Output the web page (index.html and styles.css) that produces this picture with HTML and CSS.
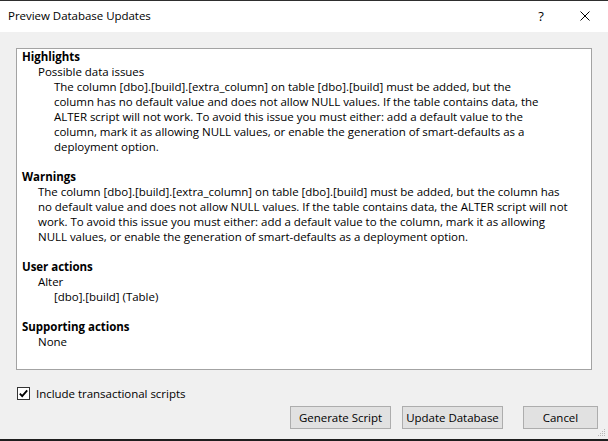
FILE: index.html
```html
<!DOCTYPE html>
<html>
<head>
<meta charset="utf-8">
<link rel="stylesheet" href="styles.css">
</head>
<body>
<div class="window">
  <div class="titlebar">
    <div class="title">Preview Database Updates</div>
    <div class="tb-btn help">?</div>
    <div class="tb-btn close">
      <svg width="10" height="10" viewBox="0 0 10 10"><path d="M0.5 0.5 L9.5 9.5 M9.5 0.5 L0.5 9.5" stroke="#000" stroke-width="1" fill="none"/></svg>
    </div>
  </div>
  <div class="body">
    <div class="panel">
      <div class="section">
        <div class="head">Highlights</div>
        <div class="l1">Possible data issues</div>
        <div class="l2">The column [dbo].[build].[extra_column] on table [dbo].[build] must be added, but the<br>column has no default value and does not allow NULL values. If the table contains data, the<br>ALTER script will not work. To avoid this issue you must either: add a default value to the<br>column, mark it as allowing NULL values, or enable the generation of smart-defaults as a<br>deployment option.</div>
      </div>
      <div class="section">
        <div class="head">Warnings</div>
        <div class="l1">The column [dbo].[build].[extra_column] on table [dbo].[build] must be added, but the column has<br>no default value and does not allow NULL values. If the table contains data, the ALTER script will not<br>work. To avoid this issue you must either: add a default value to the column, mark it as allowing<br>NULL values, or enable the generation of smart-defaults as a deployment option.</div>
      </div>
      <div class="section">
        <div class="head">User actions</div>
        <div class="l1">Alter</div>
        <div class="l2">[dbo].[build] (Table)</div>
      </div>
      <div class="section">
        <div class="head">Supporting actions</div>
        <div class="l1">None</div>
      </div>
    </div>
    <label class="check">
      <span class="box">
        <svg width="11" height="11" viewBox="0 0 11 11"><path d="M1.8 5.6 L4.2 8.2 L9.2 2.4" stroke="#000" stroke-width="1.8" fill="none"/></svg>
      </span>
      <span>Include transactional scripts</span>
    </label>
    <div class="buttons">
      <div class="btn gen">Generate Script</div>
      <div class="btn upd">Update Database</div>
      <div class="btn cancel">Cancel</div>
    </div>
  </div>
  <svg class="grip" width="8" height="8" viewBox="0 0 8 8">
    <rect x="6" y="0" width="1" height="1" fill="#b8b8b8"/>
    <rect x="4" y="2" width="1" height="1" fill="#b8b8b8"/>
    <rect x="6" y="2" width="1" height="1" fill="#b8b8b8"/>
    <rect x="2" y="4" width="1" height="1" fill="#b8b8b8"/>
    <rect x="4" y="4" width="1" height="1" fill="#b8b8b8"/>
    <rect x="6" y="4" width="1" height="1" fill="#b8b8b8"/>
    <rect x="0" y="6" width="1" height="1" fill="#b8b8b8"/>
    <rect x="2" y="6" width="1" height="1" fill="#b8b8b8"/>
    <rect x="4" y="6" width="1" height="1" fill="#b8b8b8"/>
    <rect x="6" y="6" width="1" height="1" fill="#b8b8b8"/>
  </svg>
</div>
</body>
</html>
```
FILE: styles.css
```css
html, body {
  margin: 0;
  padding: 0;
}
body {
  background: #f0f0f0;
  font-family: "Open Sans", "Noto Sans", sans-serif;
  font-size: 11.5px;
  letter-spacing: -0.03px;
  color: #000;
}
.window {
  position: relative;
  height: 441px;
  box-sizing: border-box;
  border-top: 1px solid #2e2e2e;
  border-bottom: 2px solid #1e1e1e;
  display: flex;
  flex-direction: column;
  overflow: hidden;
}
.titlebar {
  height: 31px;
  background: #fff;
  display: flex;
  align-items: center;
  flex-shrink: 0;
}
.title {
  padding-left: 8px;
  flex: 1;
  padding-bottom: 2px;
}
.tb-btn {
  display: flex;
  align-items: center;
  justify-content: center;
}
.help {
  width: 14px;
  margin-right: 32px;
  font-size: 13px;
  padding-bottom: 2px;
}
.close {
  width: 10px;
  margin-right: 18px;
  padding-bottom: 1px;
}
.body {
  flex: 1;
  display: flex;
  flex-direction: column;
  padding: 16px 10px 0 16px;
}
.panel {
  height: 322px;
  box-sizing: border-box;
  margin-right: 6px;
  background: #fff;
  border: 1px solid #a3a3a3;
  padding: 0 0 0 5px;
  line-height: 15px;
  white-space: nowrap;
  overflow: hidden;
}
.section {
  margin-bottom: 15px;
}
.head {
  font-weight: bold;
}
.l1 {
  padding-left: 16px;
}
.l2 {
  padding-left: 32px;
}
.check {
  display: flex;
  align-items: center;
  margin-top: 17px;
  margin-left: 1px;
  height: 13px;
  line-height: 13px;
}
.box {
  width: 13px;
  height: 13px;
  box-sizing: border-box;
  border: 1px solid #333;
  background: #fff;
  display: flex;
  align-items: center;
  justify-content: center;
  margin-right: 6px;
}
.buttons {
  display: flex;
  justify-content: flex-end;
  margin-top: 6px;
}
.btn {
  height: 23px;
  box-sizing: border-box;
  background: #e1e1e1;
  border: 1px solid #adadad;
  display: flex;
  align-items: center;
  justify-content: center;
}
.gen { width: 101px; margin-right: 11px; }
.upd { width: 101px; margin-right: 20px; }
.cancel { width: 75px; }
.grip {
  position: absolute;
  right: 2px;
  bottom: 2px;
}
```
